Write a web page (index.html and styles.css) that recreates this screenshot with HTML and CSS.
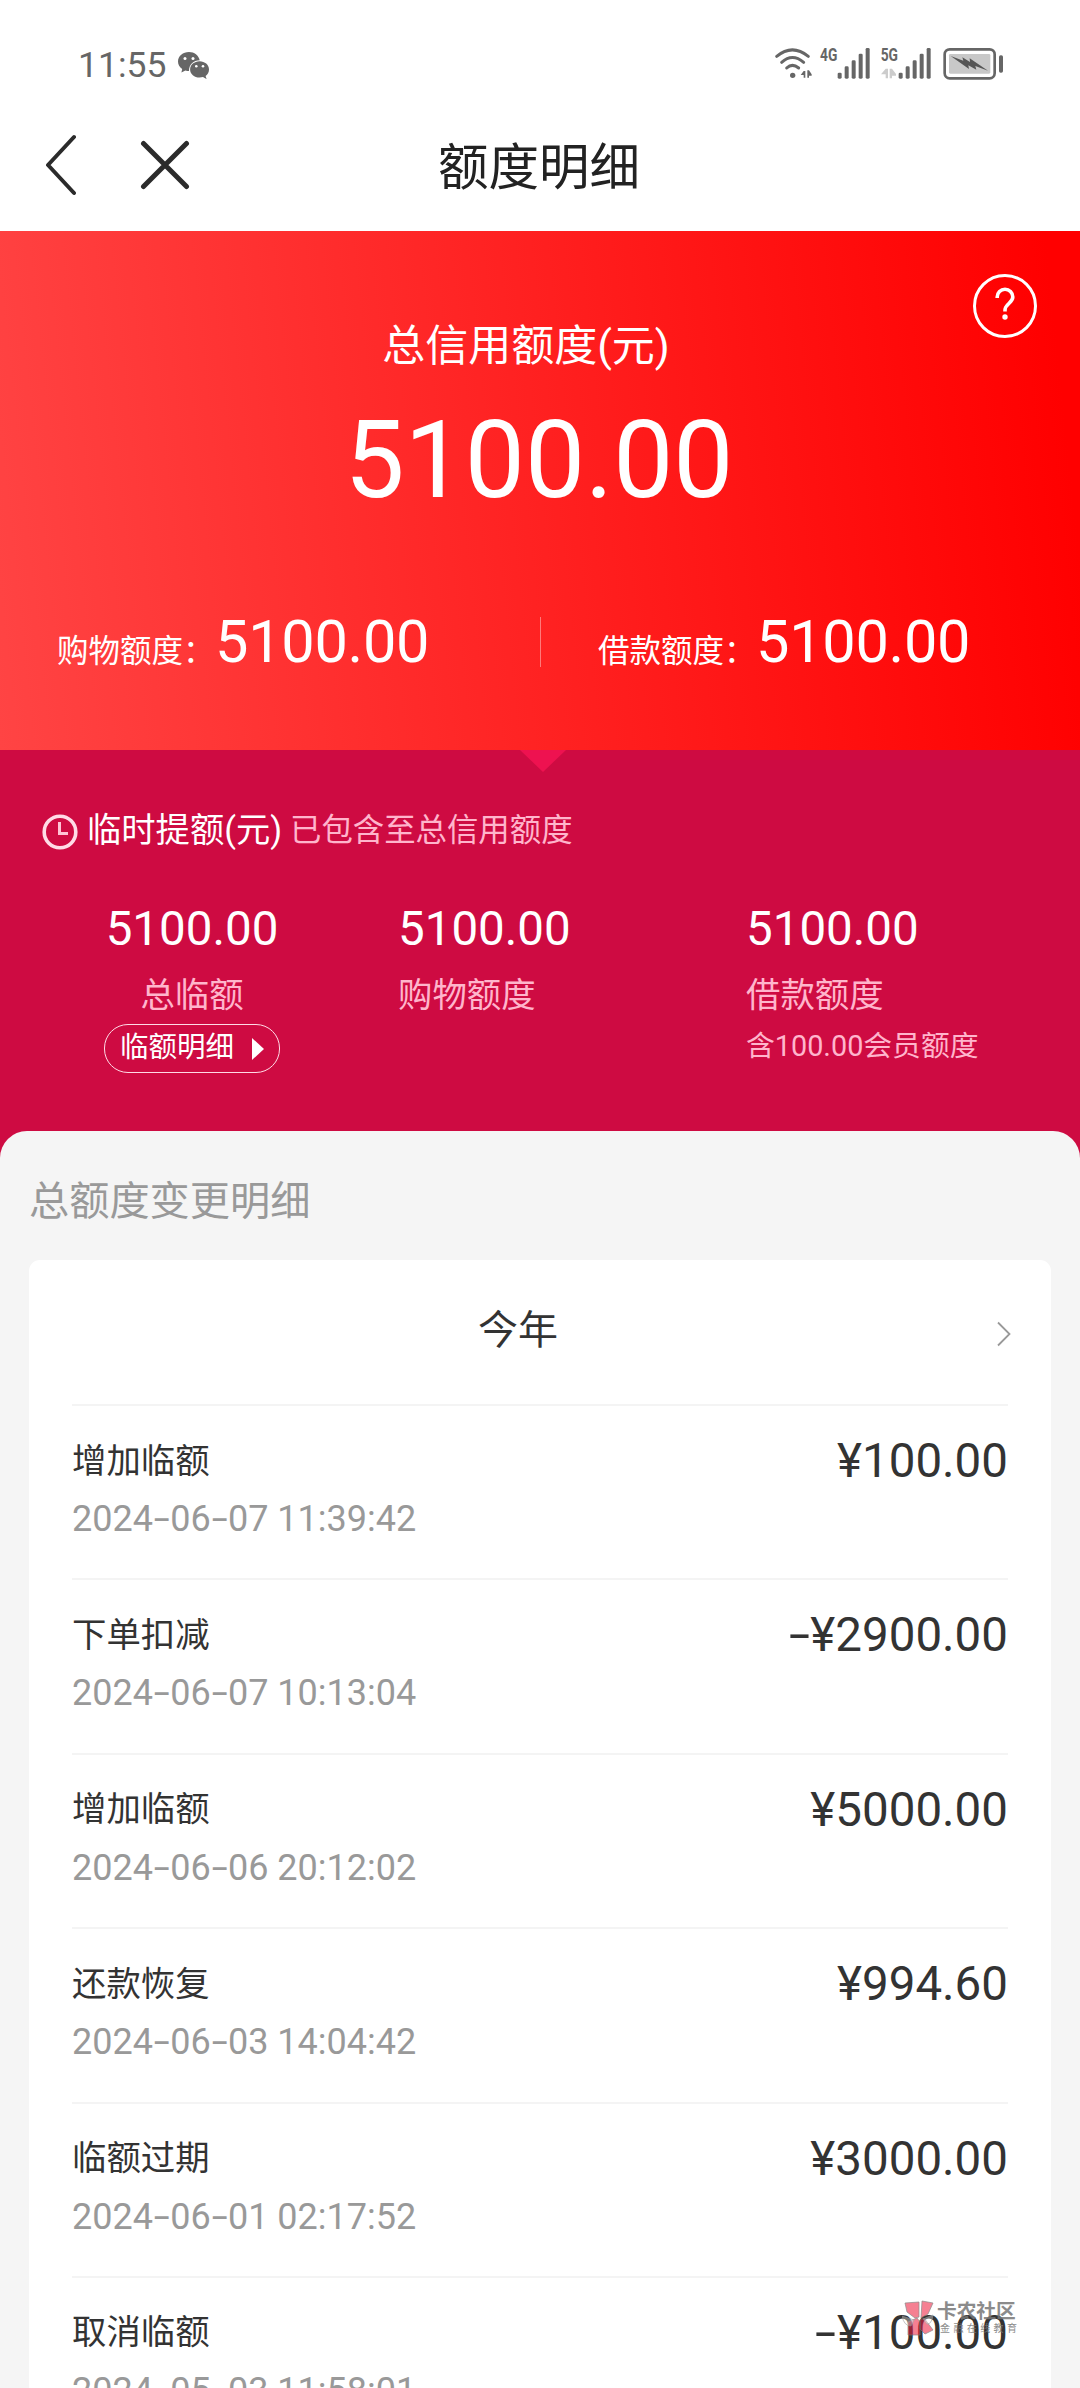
FILE: index.html
```html
<!DOCTYPE html>
<html lang="zh-CN">
<head>
<meta charset="utf-8">
<title>额度明细</title>
<link rel="stylesheet" href="styles.css">
</head>
<body>
<div class="screen">
  <header class="status">
    <span class="time">11:55</span>
    <svg class="wechat" viewBox="0 0 31 27" width="31" height="27">
      <path fill="#666" d="M11 0C5 0 0 4 0 9.6c0 3.100 1.600 5.700 4.200 7.400L3.400 20.600 7.400 18.400c1.200.4 2.400.5 3.600.5C11 12.500 15.500 8.200 21.700 8.200 20.800 3.500 16.300 0 11 0z"/>
      <path fill="#666" d="M21.600 9.200c-5.300 0-9.500 3.600-9.500 8.200s4.200 8.200 9.500 8.200c1.200 0 2.300-.2 3.400-.5l3.600 2-1-3.200c2.100-1.500 3.400-3.800 3.400-6.500 0-4.600-4.200-8.200-9.400-8.200z"/>
      <g fill="#fff"><circle cx="7" cy="6.500" r="1.500"/><circle cx="15" cy="6.500" r="1.500"/><circle cx="18.300" cy="14.300" r="1.300"/><circle cx="25" cy="14.300" r="1.300"/></g>
    </svg>
    <svg class="indicators" viewBox="0 0 690 96" width="230" height="32">
      <g fill="none" stroke="#666" stroke-width="9" stroke-linecap="round">
        <path d="M5 25Q52-14 100 25M20 43Q52 14 86 43M35 60Q52 44 71 60"/>
      </g>
      <circle cx="53" cy="82" r="8" fill="#666"/>
      <path fill="#666" d="M77 81l9-12h5v20h-5v-8zM97 67h5l8 12v4h-8v6h-5z"/>
      <g fill="#666">
        <rect x="188" y="74" width="12" height="18" rx="4"/><rect x="209" y="55" width="12" height="37" rx="4"/><rect x="230" y="37" width="12" height="55" rx="4"/><rect x="251" y="17" width="12" height="75" rx="4"/><rect x="272" y="0" width="12" height="92" rx="4"/>
        <rect x="371" y="74" width="12" height="18" rx="4"/><rect x="392" y="55" width="12" height="37" rx="4"/><rect x="413" y="37" width="12" height="55" rx="4"/><rect x="434" y="17" width="12" height="75" rx="4"/><rect x="455" y="0" width="12" height="92" rx="4"/>
        <text class="net" x="135" y="40" textLength="52" lengthAdjust="spacingAndGlyphs">4G</text>
        <text class="net" x="317" y="40" textLength="52" lengthAdjust="spacingAndGlyphs">5G</text>
      </g>
      <path fill="#ccc" d="M318 79l14-17h7v29h-7v-12zM344 62h7l12 16v5h-12v8h-7z"/>
      <rect x="509" y="4" width="150" height="87" rx="15" fill="none" stroke="#666" stroke-width="8"/>
      <rect x="522" y="18" width="124" height="59" rx="4" fill="#c8c8c8"/>
      <path fill="#555" d="M527 24l38 14-3-10 23 14-1-11 55 37-38-14 3 11-24-13 2 11z"/>
      <rect x="672" y="22" width="12" height="52" rx="5" fill="#666"/>
    </svg>
  </header>

  <nav class="navbar">
    <svg width="32" height="62" viewBox="0 0 32 62"><path d="M30 3L4 31L30 59" fill="none" stroke="#2b2b2b" stroke-width="4" stroke-linecap="round" stroke-linejoin="round"/></svg>
    <svg class="close" width="50" height="50" viewBox="0 0 50 50"><path d="M3.500 3.500L46.500 46.500M46.500 3.500L3.500 46.500" fill="none" stroke="#2b2b2b" stroke-width="5" stroke-linecap="round"/></svg>
    <h1 class="title">额度明细</h1>
  </nav>

  <section class="hero">
    <svg class="help" width="66" height="66" viewBox="0 0 66 66"><circle cx="33" cy="33" r="30.500" fill="none" stroke="#fff" stroke-width="3"/><path d="M25.200 25v-1a7.800 7.800 0 0 1 15.600 0c0 6-7.800 7-7.800 13v1.500" fill="none" stroke="#fff" stroke-width="3.600"/><circle cx="33" cy="44" r="2.700" fill="#fff"/></svg>
    <p class="hero-label">总信用额度(元)</p>
    <p class="hero-total">5100.00</p>
    <div class="split">
      <div class="part"><span class="part-label">购物额度：</span><span class="part-num">5100.00</span></div>
      <div class="part"><span class="part-label">借款额度：</span><span class="part-num">5100.00</span></div>
    </div>
  </section>

  <section class="temp">
    <div class="notch"></div>
    <div class="temp-head">
      <svg width="36" height="36" viewBox="0 0 36 36"><circle cx="18" cy="18" r="15.800" fill="none" stroke="#ffdbe6" stroke-width="3.600"/><path d="M17.500 8v11.500H26" fill="none" stroke="#ffc3d5" stroke-width="3"/></svg>
      <span class="temp-title">临时提额(元)</span>
      <span class="temp-note">已包含至总信用额度</span>
    </div>
    <div class="temp-cols">
      <div class="col col-total">
        <span class="num">5100.00</span>
        <span class="label">总临额</span>
        <span class="pill"><span>临额明细</span><i class="tri"></i></span>
      </div>
      <div class="col col-shop">
        <span class="num">5100.00</span>
        <span class="label">购物额度</span>
      </div>
      <div class="col">
        <span class="num">5100.00</span>
        <span class="label">借款额度</span>
        <span class="extra">含100.00会员额度</span>
      </div>
    </div>
  </section>

  <main class="sheet">
    <h2 class="sheet-title">总额度变更明细</h2>
    <div class="card">
      <div class="year"><span>今年</span><svg class="next" width="16" height="26" viewBox="0 0 16 26"><path d="M2 1.500L13.500 13L2 24.500" fill="none" stroke="#999" stroke-width="1.800"/></svg></div>
      <div class="row"><div class="row-top"><span class="name">增加临额</span><span class="amount">¥100.00</span></div><span class="date">2024<b>-</b>06<b>-</b>07 11:39:42</span></div>
      <div class="row"><div class="row-top"><span class="name">下单扣减</span><span class="amount"><b>-</b>¥2900.00</span></div><span class="date">2024<b>-</b>06<b>-</b>07 10:13:04</span></div>
      <div class="row"><div class="row-top"><span class="name">增加临额</span><span class="amount">¥5000.00</span></div><span class="date">2024<b>-</b>06<b>-</b>06 20:12:02</span></div>
      <div class="row"><div class="row-top"><span class="name">还款恢复</span><span class="amount">¥994.60</span></div><span class="date">2024<b>-</b>06<b>-</b>03 14:04:42</span></div>
      <div class="row"><div class="row-top"><span class="name">临额过期</span><span class="amount">¥3000.00</span></div><span class="date">2024<b>-</b>06<b>-</b>01 02:17:52</span></div>
      <div class="row"><div class="row-top"><span class="name">取消临额</span><span class="amount"><b>-</b>¥100.00</span></div><span class="date">2024<b>-</b>05<b>-</b>03 11:58:01</span></div>
    </div>
  </main>

  <div class="watermark">
    <svg width="34" height="36" viewBox="0 0 34 36">
      <g fill="#ee1c3c" fill-opacity=".65" stroke="#777" stroke-opacity=".7">
        <path d="M3 3l14-1v15l-4 1-8-6zM20 1l11 2-5 11-7 4zM6 22l9-4 3 4v13H6zM18 20l4-2 9 12-8 4-5-5z"/>
      </g>
      <g fill="#fff" fill-opacity=".4" stroke="#999" stroke-width=".7"><path d="M0 16l12 4-3 6q-7 0-9-10zM21 19l10-4q-1 9-6 9z"/></g>
    </svg>
    <div class="wm-text"><span class="wm-main">卡农社区</span><span class="wm-sub">金融在线教育</span></div>
  </div>
</div>
</body>
</html>
```
FILE: styles.css
```css
* { box-sizing: border-box; margin: 0; padding: 0; }
body {
  width: 1080px;
  background: #fff;
  font-family: Roboto, "Noto Sans CJK SC", sans-serif;
  font-weight: 400;
}
.screen { position: relative; width: 1080px; height: 2388px; overflow: hidden; display: flex; flex-direction: column; }
svg { display: block; flex: none; }

.status { height: 100px; padding: 44px 75px 0 78px; display: flex; align-items: flex-start; color: #666; }
.time { font-size: 35.5px; line-height: 42px; width: 100px; }
.wechat { margin-top: 8px; }
.indicators { margin: 4px 0 0 auto; overflow: visible; }
.net { font-size: 54px; font-weight: 700; }

.navbar { height: 131px; padding: 0 0 2px 44px; display: flex; align-items: center; position: relative; }
.close { margin-left: 64px; }
.title { width: 202px; margin-left: 248px; padding-top: 6px; font-size: 50.5px; line-height: 60px; font-weight: 400; color: #222; white-space: nowrap; }

.hero { position: relative; height: 519px; padding-top: 85px; color: #fff; background: linear-gradient(84deg, #ff4444 0%, #ff0000 97%); flex: none; }
.help { position: absolute; left: 972px; top: 42px; }
.hero-label { font-size: 43px; line-height: 60px; text-align: center; padding-right: 28px; }
.hero-total { font-size: 107px; line-height: 120px; text-align: center; margin-top: 25px; padding-right: 2px; }
.split { display: flex; margin-top: 96px; height: 50px; }
.part { width: 540px; padding-left: 57px; display: flex; align-items: baseline; line-height: 50px; height: 50px; white-space: nowrap; }
.part + .part { border-left: 1px solid rgba(255,255,255,.4); }
.part-label { font-size: 31.500px; width: 158px; }
.part-num { font-size: 59.500px; line-height: 50px; letter-spacing: -.3px; }

.temp { position: relative; height: 420px; margin-bottom: -39px; background: #ce0b42; color: #fff; padding-top: 53px; flex: none; }
.notch { position: absolute; left: 520px; top: 0; border: 23px solid transparent; border-top: 22px solid #ee1250; border-bottom: 0; }
.temp-head { display: flex; align-items: center; height: 48px; padding-left: 42px; white-space: nowrap; }
.temp-head svg { margin-top: 10px; }
.temp-title { font-size: 34.300px; width: 203px; margin-left: 9px; }
.temp-note { font-size: 31.400px; color: #ffb5cc; }
.temp-cols { display: flex; padding-left: 104px; margin-top: 48px; }
.col { display: flex; flex-direction: column; align-items: flex-start; white-space: nowrap; }
.col-total { width: 176px; align-items: center; margin-right: 118px; }
.col-shop { width: 348px; }
.num { font-size: 47.500px; line-height: 60px; }
.label { font-size: 34.400px; line-height: 50px; margin-top: 11px; color: #ffb5cc; }
.extra { font-size: 28.800px; line-height: 40px; margin-top: 6px; color: #ffb5cc; }
.pill { width: 176px; height: 49px; margin-top: 4px; border: 1.500px solid #ffdbe6; border-radius: 24px; font-size: 28.500px; line-height: 40px; display: flex; align-items: center; padding-left: 15px; }
.pill span { margin-top: -2px; }
.tri { margin-left: 18px; border: 11px solid transparent; border-left: 12px solid #fff; border-right: 0; }

.sheet { position: relative; flex: none; height: 1257px; background: #f5f5f5; border-radius: 27px 27px 0 0; padding: 41px 29px 0; }
.sheet-title { font-size: 40.200px; line-height: 60px; font-weight: 400; color: #999; }
.card { margin-top: 28px; height: 1200px; background: #fff; border-radius: 11px; padding: 0 43px; color: #333; }
.year { height: 144px; display: flex; align-items: center; font-size: 40px; white-space: nowrap; }
.year span { flex: none; margin-left: 406px; line-height: 60px; margin-top: -3px; }
.next { margin-left: 438px; margin-top: 3px; }
.row { height: 174.400px; border-top: 2px solid #f4f4f4; padding-top: 30px; }
.row-top { display: flex; justify-content: space-between; align-items: center; height: 50px; }
.name { font-size: 34.400px; line-height: 50px; margin-top: -1px; }
.amount { font-size: 47.500px; }
.date { display: block; font-size: 36px; line-height: 42px; margin-top: 12px; color: #999; }
.date b, .amount b { display: inline-block; width: .48em; font-weight: 400; text-align: center; transform: scaleX(1.600); }

.watermark { position: absolute; left: 902px; top: 2300px; display: flex; opacity: .85; }
.wm-text { display: flex; flex-direction: column; padding: 2px 0 0 1px; color: #777; white-space: nowrap; }
.wm-main { font-size: 19.700px; line-height: 20px; font-weight: 700; }
.wm-sub { font-size: 10px; line-height: 13px; letter-spacing: 3.400px; padding-left: 3px; }
```
